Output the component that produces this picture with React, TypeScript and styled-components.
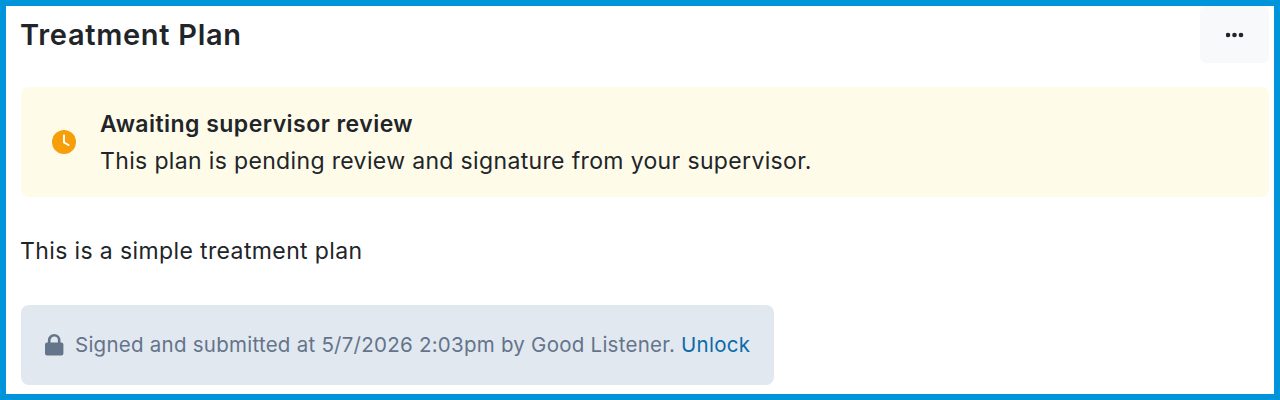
import React from "react";
import styled, { createGlobalStyle } from "styled-components";

const GlobalStyle = createGlobalStyle`
  html, body {
    margin: 0;
    padding: 0;
    background: #fff;
  }
  body {
    font-family: Inter, "Liberation Sans", sans-serif;
    color: #212529;
  }
`;

const Frame = styled.div`
  box-sizing: border-box;
  width: 1280px;
  height: 400px;
  border: 6px solid #0095da;
  padding: 0 5px 0 15px;
  overflow: hidden;
`;

const Header = styled.div`
  display: flex;
  justify-content: space-between;
  align-items: flex-start;
  height: 57px;
  margin-bottom: 24px;
`;

const Title = styled.h1`
  margin: 9px 0 0 -1px;
  font-size: 29px;
  line-height: 40px;
  font-weight: 600;
  letter-spacing: 0.7px;
`;

const MenuButton = styled.button`
  display: flex;
  align-items: center;
  justify-content: center;
  width: 69px;
  height: 57px;
  padding: 0;
  border: 0;
  border-radius: 6px;
  background: #f8f9fb;
  color: #212529;
`;

const Banner = styled.div`
  display: flex;
  align-items: center;
  gap: 24px;
  height: 110px;
  box-sizing: border-box;
  padding: 0 31px;
  border-radius: 8px;
  background: #fffbe9;
`;

const BannerText = styled.div`
  padding-top: 2px;
  font-size: 23px;
  line-height: 37px;
  letter-spacing: 0.35px;
`;

const BannerTitle = styled.div`
  font-weight: 600;
  letter-spacing: 0.46px;
`;

const Body = styled.p`
  margin: 36px 0 36px -1px;
  font-size: 23px;
  line-height: 36px;
  letter-spacing: 0.38px;
`;

const SignedBox = styled.div`
  display: inline-flex;
  align-items: center;
  gap: 10px;
  height: 80px;
  box-sizing: border-box;
  padding: 0 24px 1px;
  border-radius: 8px;
  background: #e2e8f0;
  color: #64748b;
  font-size: 20.5px;
  letter-spacing: 0.25px;
`;

const UnlockLink = styled.a`
  color: #0b6ba8;
  text-decoration: none;
`;

function ClockIcon() {
  return (
    <svg width="24" height="24" viewBox="0 0 24 24" aria-hidden="true">
      <circle cx="12" cy="12" r="12" fill="#f79e0b" />
      <path d="M12 5.5V12.5L16.5 15" fill="none" stroke="#fff" strokeWidth="2" strokeLinecap="round" strokeLinejoin="round" />
    </svg>
  );
}

function LockIcon() {
  return (
    <svg width="20" height="22" viewBox="0 0 20 22" aria-hidden="true">
      <path d="M4.2 9V6.3a5 5 0 0 1 10 0V9" fill="none" stroke="#64748b" strokeWidth="2.6" />
      <rect x="0" y="8.5" width="18.4" height="13" rx="2" fill="#64748b" />
    </svg>
  );
}

function DotsIcon() {
  return (
    <svg width="18" height="6" viewBox="0 0 18 6" aria-hidden="true">
      <circle cx="2" cy="3" r="2.3" fill="currentColor" />
      <circle cx="8.5" cy="3" r="2.3" fill="currentColor" />
      <circle cx="15" cy="3" r="2.3" fill="currentColor" />
    </svg>
  );
}

export default function App() {
  return (
    <>
      <GlobalStyle />
      <Frame>
        <Header>
          <Title>Treatment Plan</Title>
          <MenuButton aria-label="More">
            <DotsIcon />
          </MenuButton>
        </Header>
        <Banner>
          <ClockIcon />
          <BannerText>
            <BannerTitle>Awaiting supervisor review</BannerTitle>
            This plan is pending review and signature from your supervisor.
          </BannerText>
        </Banner>
        <Body>This is a simple treatment plan</Body>
        <SignedBox>
          <LockIcon />
          <span>
            Signed and submitted at 5/7/2026 2:03pm by Good Listener.{" "}
            <UnlockLink href="#">Unlock</UnlockLink>
          </span>
        </SignedBox>
      </Frame>
    </>
  );
}
